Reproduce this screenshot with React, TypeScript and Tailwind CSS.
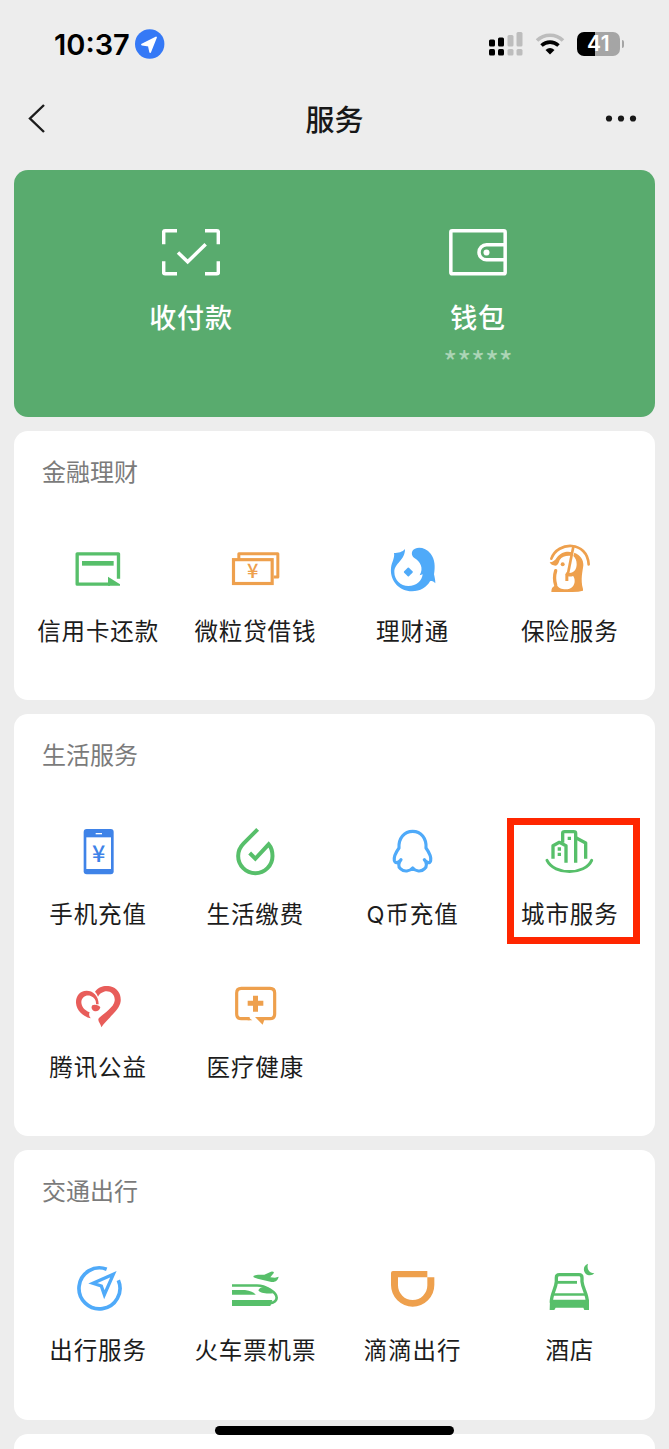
import type { ReactNode } from "react"

const GREEN = "#57bf6a"
const ORANGE = "#eea04d"
const BLUE = "#4faaf9"
const RED = "#e85d5a"

type Item = {
  label: string
  icon: ReactNode
  highlighted?: boolean
}

function Icon({ viewBox, children }: { viewBox: string; children: ReactNode }) {
  return (
    <svg viewBox={viewBox} className="h-14 w-14" fill="none">
      {children}
    </svg>
  )
}

// 金融理财
const cardIcon = (
  <Icon viewBox="150 33 168 168">
    <path d="M295.5 146V71.5H171.5V162.5H270" stroke={GREEN} strokeWidth="10" strokeLinejoin="round" />
    <path d="M186 100H281" stroke={GREEN} strokeWidth="14" />
    <path d="M264 140L300 163V167H264Z" fill={GREEN} />
  </Icon>
)

const loanIcon = (
  <Icon viewBox="622 33 168 168">
    <path d="M657.500 88V71.500H774.500V141H762" stroke={ORANGE} strokeWidth="9" strokeLinejoin="round" />
    <rect x="641.500" y="89" width="116" height="71.500" stroke={ORANGE} strokeWidth="9.500" />
    <text x="699" y="145" textAnchor="middle" fontSize="60" fontWeight="500" fill={ORANGE} className="font-['Noto_Sans_CJK_SC',sans-serif]">¥</text>
  </Icon>
)

const fishIcon = (
  <Icon viewBox="134 33 168 168">
    <path
      d="M197 57C190 66 176 69 164 69C167 84 157 96 155 114C151 152 180 184 218 184C243 184 262 172 272 154C278 151 284 154 288 160C288 150 286 142 284 133C288 110 287 88 274 71C261 55 241 50 227 56C215 61 215 76 224 83C243 95 254 113 241 136L250 133C248 152 232 168 207 168C184 168 165 150 165 126C165 98 197 93 197 57Z"
      fill={BLUE}
    />
    <path d="M207 115Q212 121 218 126Q212 131 207 137Q202 131 196 126Q202 121 207 115Z" fill={BLUE} stroke={BLUE} strokeWidth="5" strokeLinejoin="round" />
  </Icon>
)

const penguinIcon = (
  <Icon viewBox="606 33 168 168">
    <path d="M637 86C656 33 745 32 749 103" stroke={ORANGE} strokeWidth="8" strokeLinecap="round" />
    <path d="M632 97C642 96 649 90 653 83C666 66 685 63 699 67L697 78C682 76 669 80 662 90C659 100 656 107 649 107C642 107 634 103 632 97Z" fill={ORANGE} />
    <circle cx="671" cy="103" r="6" fill={ORANGE} />
    <path d="M703 50L686 135" stroke={ORANGE} strokeWidth="8" />
    <path d="M683.500 131V153" stroke={ORANGE} strokeWidth="9" />
    <path d="M650 122C645 138 646 152 650 165" stroke={ORANGE} strokeWidth="10" strokeLinecap="round" />
    <path
      d="M706 68C725 75 734 90 733 106C731 125 724 148 732 177V182Q720 186 700 186H637C637 176 640 171 646 168L652 163C657 174 668 178 680 178C697 178 707 167 707 153C707 146 705 141 702 138C694 141 686 140 680 135L682 127C700 134 713 122 713 103C713 91 709 83 703 78Z"
      fill={ORANGE}
    />
  </Icon>
)

// 生活服务
const phoneIcon = (
  <Icon viewBox="150 42 168 168">
    <rect x="191" y="57" width="90" height="136" rx="9" fill="#3f83e8" />
    <rect x="199" y="82" width="74" height="95" fill="white" />
    <path d="M227 71H246" stroke="white" strokeWidth="4" />
    <text x="236" y="155" textAnchor="middle" fontSize="70" fontWeight="500" fill="#3f83e8" className="font-['Noto_Sans_CJK_SC',sans-serif]">¥</text>
  </Icon>
)

const dropIcon = (
  <Icon viewBox="622 42 168 168">
    <path
      d="M714 58L672 100C661 111 655.500 123 655.500 138A51.500 51.500 0 0 0 758.500 138C758.500 122 754 111 747 103L707 146L690 129"
      stroke={GREEN}
      strokeWidth="12"
    />
  </Icon>
)

const qIcon = (
  <Icon viewBox="134 42 168 168">
    <path
      d="M179 114C177 85 195 64 220 64C245 64 262 85 260 114C270 128 276 142 274 152C272 162 262 158 255 149C263 158 263 170 256 176C246 187 228 184 220 174C212 184 194 187 183 176C176 170 177 158 185 149C178 158 168 162 165 152C163 142 169 128 179 114Z"
      stroke={BLUE}
      strokeWidth="9.500"
      strokeLinejoin="round"
    />
  </Icon>
)

const cityIcon = (
  <Icon viewBox="606 42 168 168">
    <path d="M624 151C646 196 738 196 758 151" stroke={GREEN} strokeWidth="9" strokeLinecap="round" />
    <g stroke={GREEN} strokeWidth="10" strokeLinejoin="round">
      <path d="M642 146V107L661 97L681 107V158" />
      <path d="M671 98V70Q671 65 677 65H704Q710 65 710 70V158" />
      <path d="M712 84L740 99V146" />
    </g>
    <path d="M656 112h10v10h-10zM656 128h10v10h-10zM686 80h10v10h-10z" fill={GREEN} />
  </Icon>
)

const heartIcon = (
  <Icon viewBox="150 21 168 168">
    <path
      d="M225 65C237 49 254 46 270 49C293 54 304 73 302 94C299 121 264 143 244 172C243 160 230 152 237 144C254 128 282 111 284 92C286 71 268 60 252 65C242 68 237 73 234 80C232 74 229 69 225 65Z"
      fill={RED}
    />
    <path
      d="M236 103C236 76 218 62 200 62C178 62 167 80 168 99C170 123 190 140 212 145C207 137 206 133 209 127C192 120 184 109 184 96C185 81 199 73 212 78C224 83 229 92 228 103Z"
      fill={RED}
    />
    <path d="M217 106C224 102 238 106 241 112C239 122 230 126 222 123C214 120 213 111 217 106Z" fill={RED} />
  </Icon>
)

const medicalIcon = (
  <Icon viewBox="622 21 168 168">
    <path d="M690 146H665Q651 146 651 132V69Q651 55 665 55H751Q765 55 765 69V132Q765 146 751 146H718" stroke={ORANGE} strokeWidth="9.500" />
    <path d="M684 141L698 150.500H684ZM706 141H737L729 164Z" fill={ORANGE} />
    <path d="M684 100H731M707.500 77V125" stroke={ORANGE} strokeWidth="15" />
  </Icon>
)

// 交通出行
const travelIcon = (
  <Icon viewBox="150 27 168 168">
    <path d="M260 54.500A61.500 61.500 0 1 0 295 88" stroke={BLUE} strokeWidth="11" />
    <path d="M280 70L219 97L244 105L253 131Z" stroke={BLUE} strokeWidth="10" />
  </Icon>
)

const trainIcon = (
  <Icon viewBox="622 27 168 168">
    <path d="M637 103.500H712C738 103.500 771 124 771 140C771 150 761 155 750 157" stroke={GREEN} strokeWidth="8" />
    <path d="M637 147H758L752 165H637Z" fill={GREEN} />
    <path d="M637 117H676C692 119 703 124 708 131H637Z" fill={GREEN} />
    <path d="M716 118C719 107 738 105 750 112L760 127C740 129 721 127 716 118Z" fill={GREEN} />
    <path d="M701 75C710 69 724 72 734 71L754 62Q762 61 763 65L752 79L766 80L777 77C775 88 767 95 752 92C735 88 716 84 702 79Z" fill={GREEN} />
  </Icon>
)

const didiIcon = (
  <Icon viewBox="134 27 168 168">
    <path
      d="M155 66Q155 60 161 60H264V79H285V102A65 65 0 0 1 155 102ZM176 79V103A44 44 0 0 0 264 103V79Z"
      fill={ORANGE}
      fillRule="evenodd"
    />
  </Icon>
)

const hotelIcon = (
  <Icon viewBox="606 27 168 168">
    <path
      d="M637 155C636 130 651 113 652 92V80Q652 71 661 71H720Q729 71 729 80V92C731 113 746 130 745 155"
      stroke={GREEN}
      strokeWidth="10"
    />
    <path d="M654 94H714" stroke={GREEN} strokeWidth="8.500" />
    <path d="M640 130.500H742" stroke={GREEN} strokeWidth="8" />
    <path d="M633 146H750V177H736L733 170H650L646 177H632Z" fill={GREEN} />
    <path d="M747 38C733 43 731 58 740 68C748 75 760 74 766 67C752 67 742 54 747 38Z" fill={GREEN} />
  </Icon>
)

const sections: { title: string; height: string; items: Item[] }[] = [
  {
    title: "金融理财",
    height: "h-[269px]",
    items: [
      { label: "信用卡还款", icon: cardIcon },
      { label: "微粒贷借钱", icon: loanIcon },
      { label: "理财通", icon: fishIcon },
      { label: "保险服务", icon: penguinIcon },
    ],
  },
  {
    title: "生活服务",
    height: "h-[422px]",
    items: [
      { label: "手机充值", icon: phoneIcon },
      { label: "生活缴费", icon: dropIcon },
      { label: "Q币充值", icon: qIcon },
      { label: "城市服务", icon: cityIcon, highlighted: true },
      { label: "腾讯公益", icon: heartIcon },
      { label: "医疗健康", icon: medicalIcon },
    ],
  },
  {
    title: "交通出行",
    height: "h-[270px]",
    items: [
      { label: "出行服务", icon: travelIcon },
      { label: "火车票机票", icon: trainIcon },
      { label: "滴滴出行", icon: didiIcon },
      { label: "酒店", icon: hotelIcon },
    ],
  },
]

function StatusBar() {
  return (
    <div className="flex h-[88px] items-center justify-between pr-[45px] pl-[54px]">
      <div className="flex items-center gap-[5px]">
        <span className="w-[76px] font-['Inter',sans-serif] text-[29px] leading-none font-semibold whitespace-nowrap text-black">10:37</span>
        <svg width="30" height="30" viewBox="0 0 30 30">
          <circle cx="14.700" cy="15" r="14.700" fill="#3579f6" />
          <path d="M7 15.500L21 8.500L15.200 23L13.800 16.500Z" fill="white" stroke="white" strokeWidth="1.800" strokeLinejoin="round" />
        </svg>
      </div>
      <div className="flex items-center">
        <svg width="34" height="24" viewBox="0 0 34 24">
          <rect x="0" y="7.500" width="6" height="7" rx="1.500" fill="black" />
          <rect x="9" y="5.500" width="6" height="9" rx="1.500" fill="black" />
          <rect x="18.500" y="3" width="6" height="11.500" rx="1.500" fill="#bdbdbd" />
          <rect x="27.500" y="0" width="6" height="14.500" rx="1.500" fill="#bdbdbd" />
          <rect x="0" y="17" width="6" height="6.500" rx="1.500" fill="black" />
          <rect x="9" y="17" width="6" height="6.500" rx="1.500" fill="black" />
          <rect x="18.500" y="17" width="6" height="6.500" rx="1.500" fill="#bdbdbd" />
          <rect x="27.500" y="17" width="6" height="6.500" rx="1.500" fill="#bdbdbd" />
        </svg>
        <svg width="30" height="24" viewBox="0 0 30 24" fill="none" className="ml-3">
          <path d="M2 8.500C9 1.500 21 1.500 28 8.500" stroke="#bdbdbd" strokeWidth="3.600" />
          <path d="M6.500 13.500C11.500 9 18.500 9 23.500 13.500" stroke="black" strokeWidth="3.600" />
          <path d="M10.500 18Q15 14.200 19.500 18L15 22.500Z" fill="black" />
        </svg>
        <div className="ml-3 flex h-6 w-[43px] items-center justify-center rounded-[7px] bg-linear-to-r from-black from-42% to-[#a5a5a5] to-42% font-['Inter',sans-serif] text-[21px] font-semibold tracking-[0.500px] text-white">
          41
        </div>
        <div className="ml-[1.500px] h-2 w-[2.500px] rounded-r-full bg-[#a5a5a5]" />
      </div>
    </div>
  )
}

function NavBar() {
  return (
    <div className="flex h-[62px] items-center justify-between pr-8 pl-7">
      <svg width="32" height="30" viewBox="0 0 32 30" fill="none">
        <path d="M16 1L2 14.500L16 28" stroke="#1c1c1c" strokeWidth="2.400" />
      </svg>
      <h1 className="mb-px ml-1 text-[29px] leading-none font-medium text-[#181818]">服务</h1>
      <svg width="32" height="8" viewBox="0 0 32 8" fill="#181818">
        <circle cx="4" cy="3.500" r="3.100" />
        <circle cx="16" cy="3.500" r="3.100" />
        <circle cx="28" cy="3.500" r="3.100" />
      </svg>
    </div>
  )
}

function Section({ title, height, items }: { title: string; height: string; items: Item[] }) {
  return (
    <section className={`${height} shrink-0 rounded-[14px] bg-white pr-[7px] pl-[5px]`}>
      <h2 className="pt-[25px] pl-[23px] text-[24px] leading-[30px] text-[#7b7b7b]">{title}</h2>
      <div className="mt-[55px] grid grid-cols-4 gap-y-[33px]">
        {items.map((item) => (
          <div key={item.label} className="relative flex h-[120px] flex-col items-center">
            {item.icon}
            <span className="mt-5 ml-px font-['Inter','Noto_Sans_CJK_SC',sans-serif] text-[23.500px] leading-[30px] tracking-[0.900px] whitespace-nowrap text-[#1c1c1c]">{item.label}</span>
            {item.highlighted && (
              <div className="absolute -top-1.5 left-4 h-[126px] w-[133px] border-[7px] border-[#ff2600]" />
            )}
          </div>
        ))}
      </div>
    </section>
  )
}

export default function App() {
  return (
    <div className="relative h-[1449px] w-[669px] overflow-hidden bg-[#ededed] font-['Noto_Sans_CJK_SC',sans-serif]">
      <StatusBar />
      <NavBar />
      <main className="mt-5 flex flex-col gap-3.5 px-3.5">
        <div className="flex h-[247px] shrink-0 rounded-[14px] bg-[#59ab6e] px-[33.500px] pt-[59px] text-white">
          <div className="flex flex-1 flex-col items-center">
            <svg width="58" height="47" viewBox="96 56.500 174 141" fill="none" stroke="white" strokeWidth="10.500">
              <path d="M101 102V66Q101 62 105 62H141M225 62H261Q265 62 265 66V102M265 153V187Q265 191 261 191H225M141 191H105Q101 191 101 187V153" />
              <path d="M144 127L173 155L227 102" />
            </svg>
            <span className="mt-6 text-[27px] leading-[34px] font-medium tracking-[0.800px]">收付款</span>
          </div>
          <div className="flex flex-1 flex-col items-center">
            <svg width="58" height="47" viewBox="957.500 56.500 174 141" fill="none" stroke="white" strokeWidth="10.500">
              <rect x="963" y="62" width="163" height="129" rx="4" />
              <path d="M1126 104H1070A22.500 22.500 0 0 0 1070 149H1126" />
              <circle cx="1070" cy="127" r="9" fill="white" stroke="none" />
            </svg>
            <span className="mt-6 text-[27px] leading-[34px] font-medium tracking-[0.800px]">钱包</span>
            <span className="mt-3 text-[30px] leading-[30px] tracking-[-0.100px] text-white/50">*****</span>
          </div>
        </div>
        {sections.map((section) => (
          <Section key={section.title} {...section} />
        ))}
        <div className="h-16 shrink-0 rounded-[14px] bg-white" />
      </main>
      {/* home indicator */}
      <div className="absolute bottom-3.5 left-[215px] h-[9px] w-[239px] rounded-full bg-black" />
    </div>
  )
}
